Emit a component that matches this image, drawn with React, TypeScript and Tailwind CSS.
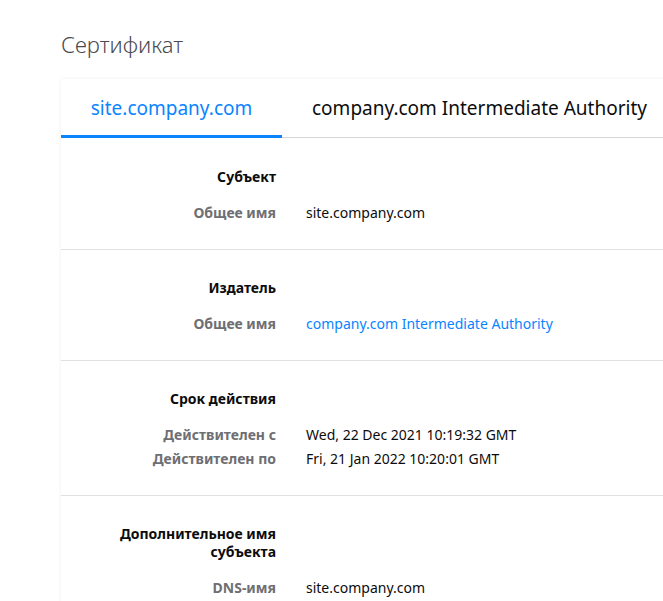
export default function App() {
  const sections = [
    {
      title: ["Субъект"],
      rows: [{ label: "Общее имя", value: "site.company.com" }],
    },
    {
      title: ["Издатель"],
      rows: [{ label: "Общее имя", value: "company.com Intermediate Authority", link: true }],
    },
    {
      title: ["Срок действия"],
      rows: [
        { label: "Действителен с", value: "Wed, 22 Dec 2021 10:19:32 GMT" },
        { label: "Действителен по", value: "Fri, 21 Jan 2022 10:20:01 GMT" },
      ],
    },
    {
      title: ["Дополнительное имя", "субъекта"],
      rows: [{ label: "DNS-имя", value: "site.company.com" }],
    },
  ];

  return (
    <div
      className="h-screen bg-white overflow-hidden pl-[61px]"
      style={{ fontFamily: '"Noto Sans", "Open Sans", sans-serif' }}
    >
      <h1 className="pt-[29px] h-[79px] text-[22px] font-light text-[#4a4a4f] leading-[30px]">
        Сертификат
      </h1>

      <div className="w-[640px] bg-white shadow-[0_0_3px_rgba(0,0,0,0.08)]">
        <div className="flex border-b border-[#d7d7db] h-[59px]">
          <div className="w-[221px] flex items-center justify-center pt-[2px] text-[19px] text-[#0a84ff] border-b-[3px] border-[#0a84ff] -mb-px">
            site.company.com
          </div>
          <div className="pl-[30px] flex items-center pt-[1px] text-[19px] text-[#0c0c0d] whitespace-nowrap">
            company.com Intermediate Authority
          </div>
        </div>

        {sections.map((s, i) => (
          <div
            key={i}
            className={`${i === 0 ? "pt-[28px]" : "pt-[27px]"} pb-[24px] ${i < sections.length - 1 ? "border-b border-[#e0e0e2]" : ""}`}
          >
            <div className="grid grid-cols-[215px_1fr] gap-x-[30px] text-[14px]">
              <div className="text-right font-bold text-[#0c0c0d] leading-[18px] py-[2px]">
                {s.title.map((t) => (
                  <div key={t}>{t}</div>
                ))}
              </div>
              <div />
            </div>
            <div className="grid grid-cols-[215px_1fr] gap-x-[30px] text-[14px] mt-[13px]">
              {s.rows.map((r) => (
                <div key={r.label} className="contents">
                  <div className="text-right font-bold text-[#6e6e73] leading-[24px]">
                    {r.label}
                  </div>
                  <div
                    className={`leading-[24px] ${r.link ? "text-[#0a84ff]" : "text-[#0c0c0d]"}`}
                  >
                    {r.value}
                  </div>
                </div>
              ))}
            </div>
          </div>
        ))}
      </div>
    </div>
  );
}
